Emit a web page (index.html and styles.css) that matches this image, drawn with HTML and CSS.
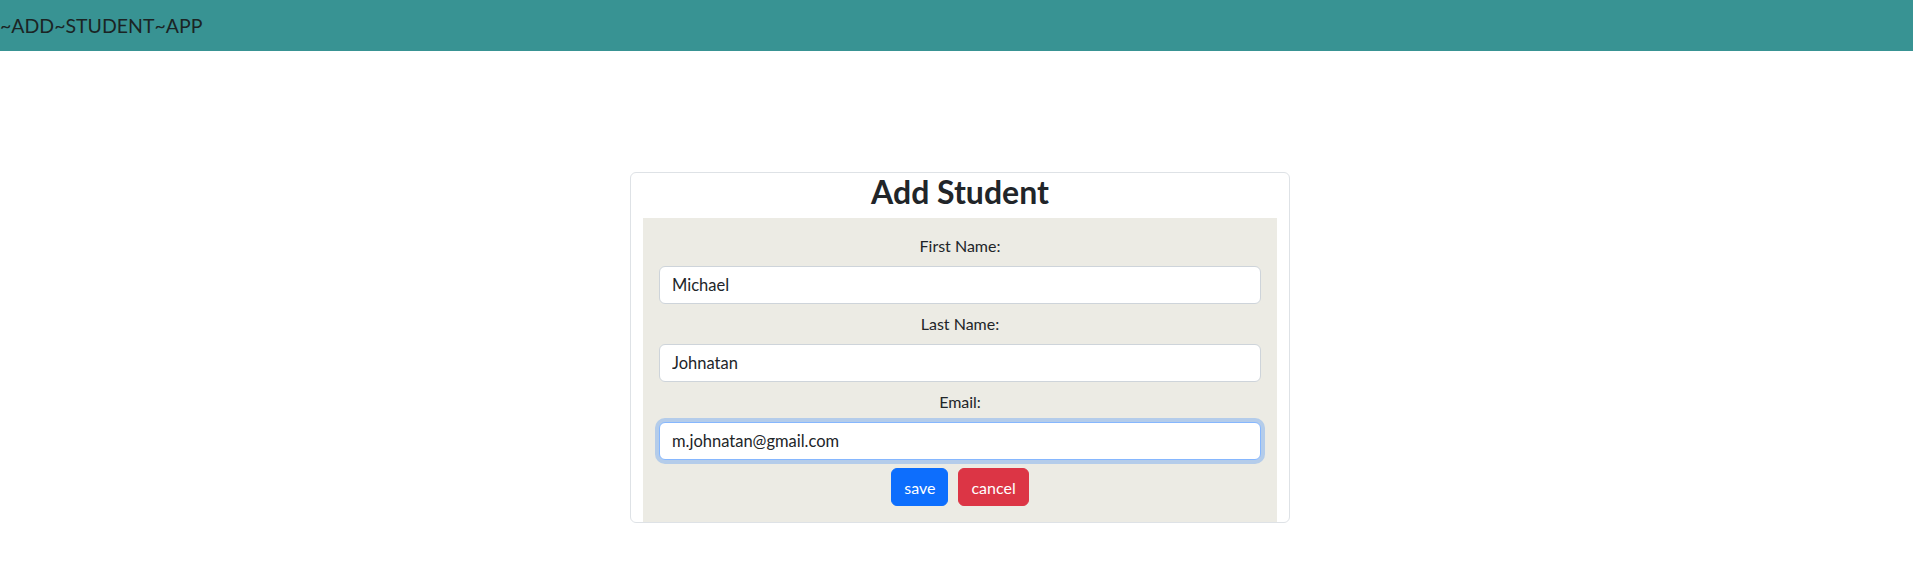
FILE: index.html
```html
<!DOCTYPE html>
<html lang="en">
<head>
<meta charset="utf-8">
<title>Add Student</title>
<link rel="stylesheet" href="styles.css">
</head>
<body>
<header class="topbar">
  <span class="brand">~ADD~STUDENT~APP</span>
</header>
<main class="page">
  <section class="card">
    <h2 class="card-title">Add Student</h2>
    <form class="form-panel">
      <label class="field-label" for="first">First Name:</label>
      <input class="field-input" id="first" type="text" value="Michael">
      <label class="field-label" for="last">Last Name:</label>
      <input class="field-input" id="last" type="text" value="Johnatan">
      <label class="field-label" for="email">Email:</label>
      <input class="field-input is-focused" id="email" type="text" value="m.johnatan@gmail.com">
      <div class="actions">
        <button type="button" class="btn btn-save">save</button>
        <button type="button" class="btn btn-cancel">cancel</button>
      </div>
    </form>
  </section>
</main>
</body>
</html>
```

FILE: styles.css
```css
* { box-sizing: border-box; }
html, body {
  margin: 0;
  padding: 0;
  background: #fff;
  font-family: Lato, "Noto Sans", sans-serif;
  color: #212529;
}
.topbar {
  height: 51px;
  background: #389393;
  display: flex;
  align-items: center;
}
.brand {
  font-size: 19.5px;
  color: #1b2424;
  line-height: 1;
}
.page {
  display: flex;
  justify-content: center;
  padding-top: 121px;
  padding-left: 7px;
}
.card {
  width: 660px;
  border: 1px solid #dee2e6;
  border-radius: 6px;
  padding: 0 12px;
  background: #fff;
}
.card-title {
  margin: 0 0 7px;
  text-align: center;
  font-size: 32px;
  font-weight: 700;
  line-height: 38px;
  color: #212529;
}
.form-panel {
  background: #ecebe4;
  padding: 16px;
  display: flex;
  flex-direction: column;
  align-items: stretch;
}
.field-label {
  text-align: center;
  font-size: 16px;
  line-height: 24px;
  margin: 0 0 8px;
}
.field-input {
  display: block;
  width: 100%;
  height: 38px;
  padding: 6px 12px;
  font-family: inherit;
  font-size: 16.5px;
  color: #212529;
  background: #fff;
  border: 1px solid #ced4da;
  border-radius: 6px;
  margin: 0 0 8px;
  outline: none;
}
.field-input.is-focused {
  border-color: #86b7fe;
  box-shadow: 0 0 0 4px rgba(13, 110, 253, 0.25);
}
.actions {
  display: flex;
  justify-content: center;
  gap: 10px;
}
.btn {
  height: 38px;
  padding: 6px 12px;
  font-family: inherit;
  font-size: 16px;
  color: #fff;
  border: 1px solid transparent;
  border-radius: 6px;
  cursor: pointer;
}
.btn-save { background: #0d6efd; border-color: #0d6efd; }
.btn-cancel { background: #dc3545; border-color: #dc3545; }
```
